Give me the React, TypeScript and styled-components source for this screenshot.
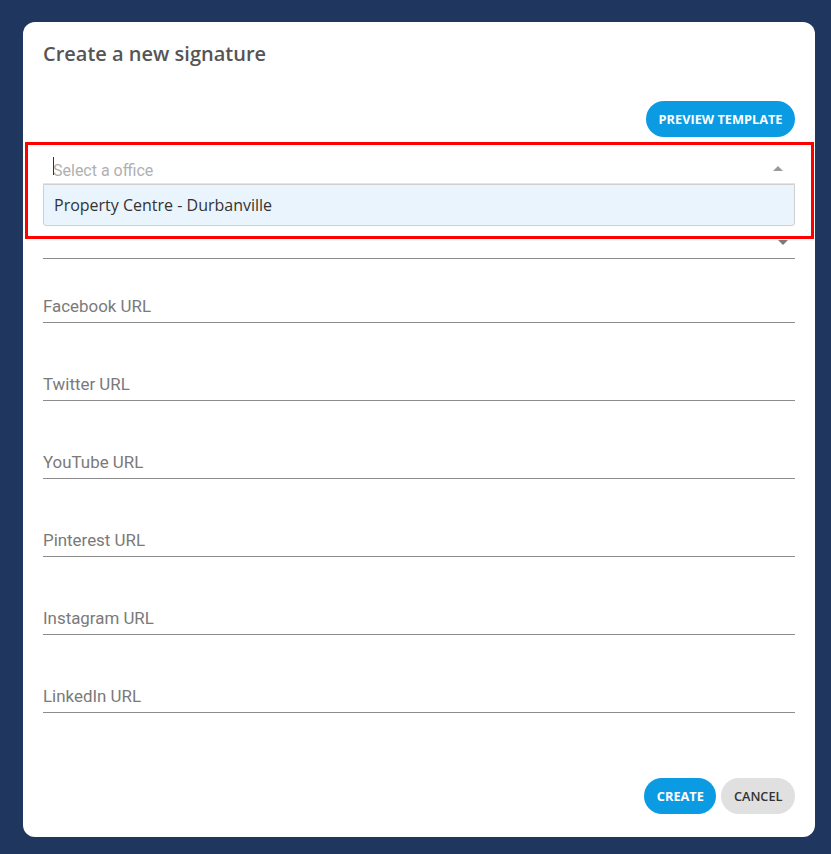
import React from 'react';
import styled, { createGlobalStyle } from 'styled-components';

const GlobalStyle = createGlobalStyle`
  html, body {
    margin: 0;
    padding: 0;
    background: #1f365f;
  }
  body {
    font-family: 'Open Sans', 'Liberation Sans', sans-serif;
  }
`;

const Page = styled.div`
  padding: 22px 16px 17px 23px;
`;

const Modal = styled.div`
  position: relative;
  width: 792px;
  box-sizing: border-box;
  background: #ffffff;
  border-radius: 12px;
  padding: 20px 20px 23px 20px;
  display: flex;
  flex-direction: column;
`;

const Title = styled.h2`
  margin: 0;
  font-size: 20px;
  line-height: 24px;
  font-weight: 600;
  color: #555555;
`;

const ActionRow = styled.div<{ $top: number }>`
  display: flex;
  justify-content: flex-end;
  gap: 5px;
  margin-top: ${(p) => p.$top}px;
`;

const PillButton = styled.button<{ $variant?: 'primary' | 'muted' }>`
  height: 36px;
  padding: 0 12.5px;
  border: none;
  border-radius: 18px;
  font-family: 'Open Sans', 'Liberation Sans', sans-serif;
  font-size: 12.75px;
  font-weight: ${(p) => (p.$variant === 'muted' ? 600 : 700)};
  text-transform: uppercase;
  background: ${(p) => (p.$variant === 'muted' ? '#e0e0e0' : '#0a9be3')};
  color: ${(p) => (p.$variant === 'muted' ? '#333333' : '#ffffff')};
  cursor: pointer;
`;

const Form = styled.div`
  display: flex;
  flex-direction: column;
`;

const Field = styled.div<{ $top: number; $line?: string }>`
  position: relative;
  height: 32px;
  margin-top: ${(p) => p.$top}px;
  border-bottom: 1px solid ${(p) => p.$line || '#8c8c8c'};
  display: flex;
  align-items: center;
`;

const Label = styled.span`
  font-family: Roboto, 'Liberation Sans', sans-serif;
  font-size: 16.9px;
  color: #7a7a7a;
`;

const Placeholder = styled.span`
  font-family: Roboto, 'Liberation Sans', sans-serif;
  font-size: 16px;
  color: #b0b0b0;
  padding-left: 10px;
  margin-top: 7px;
  position: relative;
`;

const Caret = styled.span`
  position: absolute;
  left: 10px;
  top: -4px;
  width: 1px;
  height: 18px;
  background: #333;
`;

const Arrow = styled.span<{ $up?: boolean; $right: number; $top: number }>`
  position: absolute;
  right: ${(p) => p.$right}px;
  top: ${(p) => p.$top}px;
  width: 0;
  height: 0;
  border-left: 5px solid transparent;
  border-right: 5px solid transparent;
  ${(p) =>
    p.$up ? 'border-bottom: 5px solid #9a9a9a;' : 'border-top: 5px solid #7a7a7a;'}
`;

const Menu = styled.div`
  position: absolute;
  left: 20px;
  right: 20px;
  top: 162px;
  height: 42px;
  box-sizing: border-box;
  background: #eaf4fd;
  border: 1px solid #d0d0d0;
  border-radius: 0 0 3px 3px;
  display: flex;
  align-items: center;
  padding-left: 10px;
  font-size: 16px;
  color: #333333;
  z-index: 2;
`;

const Highlight = styled.div`
  position: absolute;
  left: 2px;
  top: 120px;
  width: 789px;
  height: 97px;
  box-sizing: border-box;
  border: 3px solid #ff0000;
  z-index: 3;
  pointer-events: none;
`;

const urlFields = [
  'Facebook URL',
  'Twitter URL',
  'YouTube URL',
  'Pinterest URL',
  'Instagram URL',
  'LinkedIn URL',
];

const App: React.FC = () => {
  return (
    <>
      <GlobalStyle />
      <Page>
        <Modal>
          <Title>Create a new signature</Title>
          <ActionRow $top={35}>
            <PillButton>Preview template</PillButton>
          </ActionRow>
          <Form>
            <Field $top={14} $line='#e4e4e4'>
              <Placeholder>
                <Caret />
                Select a office
              </Placeholder>
              <Arrow $up $right={12} $top={15} />
            </Field>
            <Field $top={42}>
              <Arrow $right={7} $top={14} />
            </Field>
            {urlFields.map((name, i) => (
              <Field key={name} $top={i === 0 ? 31 : 45}>
                <Label>{name}</Label>
              </Field>
            ))}
          </Form>
          <ActionRow $top={65}>
            <PillButton>Create</PillButton>
            <PillButton $variant='muted'>Cancel</PillButton>
          </ActionRow>
          <Menu>Property Centre - Durbanville</Menu>
          <Highlight />
        </Modal>
      </Page>
    </>
  );
};

export default App;
